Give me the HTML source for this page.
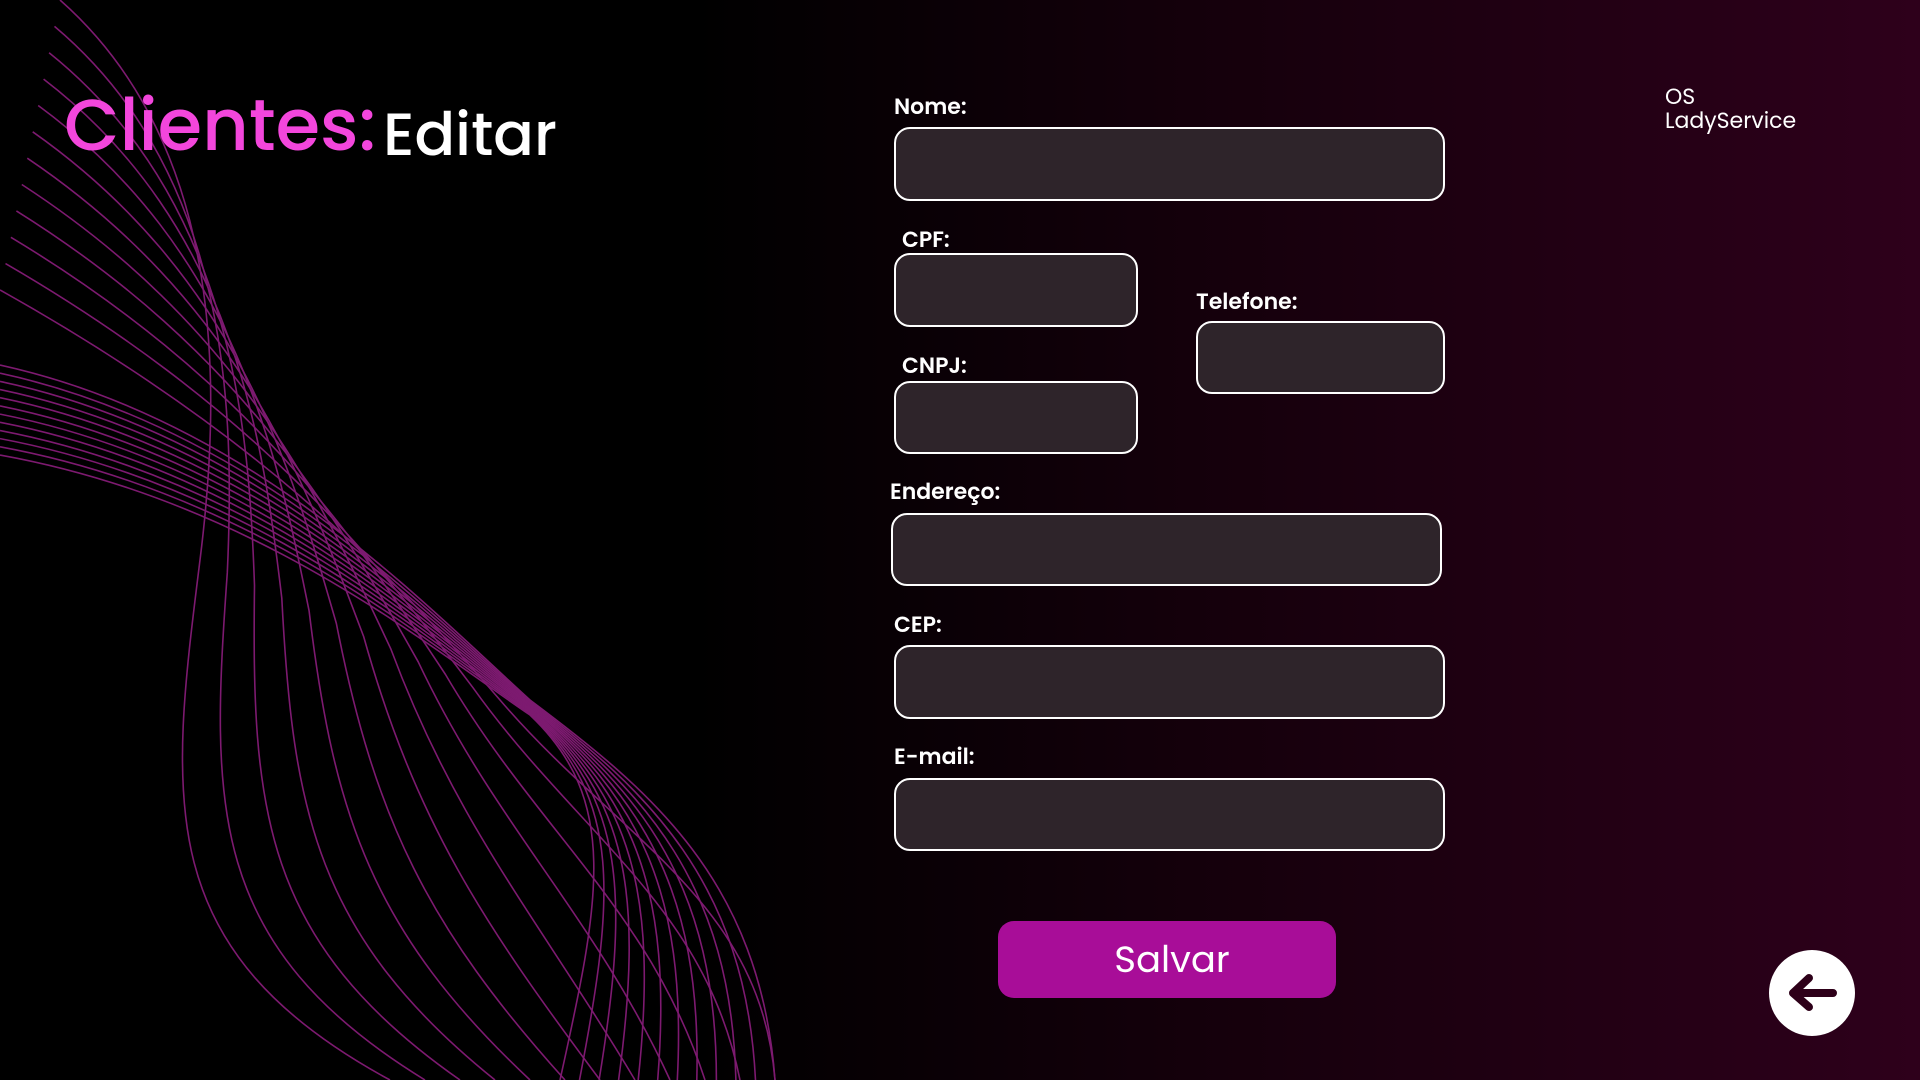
<!DOCTYPE html>
<html><head><meta charset="utf-8"><style>
*{margin:0;padding:0;box-sizing:border-box}
html,body{width:1920px;height:1080px;overflow:hidden}
body{position:relative;background:linear-gradient(90deg,#000 0%,#000 36%,#14000b 62%,#2e001b 100%);font-family:"Poppins","Liberation Sans",sans-serif;color:#fff}
svg.w{position:absolute;left:0;top:0}
.t1{position:absolute;left:64px;top:90px;font-size:72px;font-weight:500;color:#f346dc;line-height:1}
.t2{position:absolute;left:383px;top:104px;font-size:60px;font-weight:500;color:#fff;line-height:1}
.lbl{position:absolute;font-size:22px;font-weight:600;line-height:1}
.box{position:absolute;background:#2e242a;border:2px solid #fff;border-radius:16px}
.btn{position:absolute;left:998px;top:921px;width:338px;height:77px;background:#a80d98;border-radius:16px;font-size:37px;text-align:center;line-height:77px;padding-left:10px}
.logo{position:absolute;left:1665px;top:85px;font-size:22px;line-height:24px}
</style></head><body>
<svg class="w" width="1920" height="1080" id="sv"></svg>
<div class="t1">Clientes:</div><div class="t2">Editar</div>
<div class="lbl" style="left:894px;top:96px">Nome:</div>
<div class="box" style="left:894px;top:127px;width:551px;height:74px"></div>
<div class="lbl" style="left:902px;top:229px">CPF:</div>
<div class="box" style="left:894px;top:253px;width:244px;height:74px"></div>
<div class="lbl" style="left:902px;top:355px">CNPJ:</div>
<div class="box" style="left:894px;top:381px;width:244px;height:73px"></div>
<div class="lbl" style="left:1196px;top:291px">Telefone:</div>
<div class="box" style="left:1196px;top:321px;width:249px;height:73px"></div>
<div class="lbl" style="left:890px;top:481px">Endereço:</div>
<div class="box" style="left:891px;top:513px;width:551px;height:73px"></div>
<div class="lbl" style="left:894px;top:614px">CEP:</div>
<div class="box" style="left:894px;top:645px;width:551px;height:74px"></div>
<div class="lbl" style="left:894px;top:746px">E-mail:</div>
<div class="box" style="left:894px;top:778px;width:551px;height:73px"></div>
<div class="btn">Salvar</div>
<div class="logo">OS<br>LadyService</div>
<svg style="position:absolute;left:1769px;top:950px" width="86" height="86" viewBox="0 0 86 86">
<circle cx="43" cy="43" r="43" fill="#fff"/>
<path d="M64 43H24M40 28L24 43L40 57" stroke="#2e0019" stroke-width="8" fill="none" stroke-linecap="round" stroke-linejoin="round"/>
</svg>
<script>
var sv=document.getElementById('sv');
function fam(a,b,n){for(var k=0;k<n;k++){var t=k/(n-1),p=[];for(var i=0;i<a.length;i++)p.push((a[i]+(b[i]-a[i])*t).toFixed(1));
var d='M'+p[0]+','+p[1]+' C'+p[2]+','+p[3]+' '+p[4]+','+p[5]+' '+p[6]+','+p[7]+' C'+p[8]+','+p[9]+' '+p[10]+','+p[11]+' '+p[12]+','+p[13];
var e=document.createElementNS('http://www.w3.org/2000/svg','path');e.setAttribute('d',d);e.setAttribute('fill','none');e.setAttribute('stroke','#7d1a70');e.setAttribute('stroke-width','1.6');sv.appendChild(e);}}
fam([60,0,230,150,220,400,200,560,170,800,150,950,390,1080],[0,290,250,430,380,560,500,700,620,840,760,900,775,1080],12);
fam([0,365,250,420,420,600,530,700,650,790,760,880,775,1080],[0,455,250,500,420,640,530,715,620,800,600,900,560,1080],12);
</script>
</body></html>
